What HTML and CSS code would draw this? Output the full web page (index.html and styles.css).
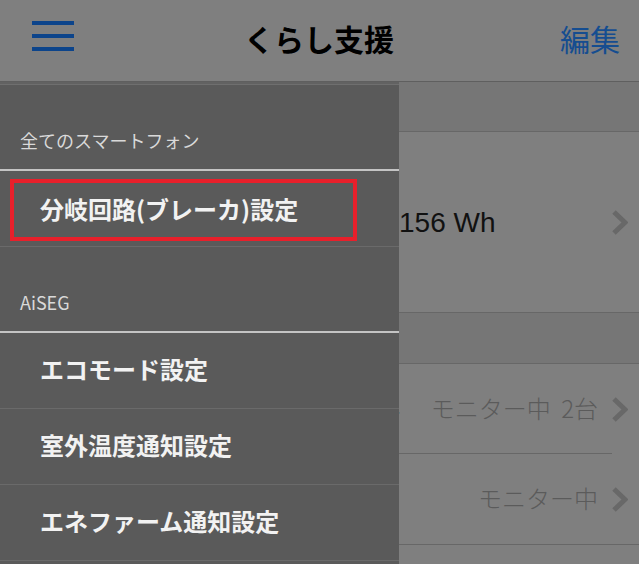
FILE: index.html
```html
<!DOCTYPE html>
<html lang="ja">
<head>
<meta charset="utf-8">
<link rel="stylesheet" href="styles.css">
</head>
<body>
<div class="app">
  <header class="navbar">
    <div class="hamburger"><span></span><span></span><span></span></div>
    <h1 class="title">くらし支援</h1>
    <div class="edit">編集</div>
  </header>
  <main class="content">
    <div class="section-head"></div>
    <div class="cell cell-big">
      <span class="spacer"></span>
      <span class="value">156 Wh</span>
      <svg class="chev" width="17" height="25" viewBox="0 0 17 25"><polyline points="3,2 14,12.5 3,23" fill="none" stroke="#686868" stroke-width="5"/></svg>
    </div>
    <div class="section-head sec2"></div>
    <div class="group">
      <div class="cell cell-row">
        <span class="label row-label">スマートパネル</span>
        <span class="detail">モニター中 2台</span>
        <svg class="chev" width="17" height="25" viewBox="0 0 17 25"><polyline points="3,2 14,12.5 3,23" fill="none" stroke="#686868" stroke-width="5"/></svg>
      </div>
      <div class="cell cell-row">
        <span class="detail">モニター中</span>
        <svg class="chev" width="17" height="25" viewBox="0 0 17 25"><polyline points="3,2 14,12.5 3,23" fill="none" stroke="#686868" stroke-width="5"/></svg>
      </div>
    </div>
  </main>

  <nav class="drawer">
    <div class="drawer-top"></div>
    <div class="group-head">全てのスマートフォン</div>
    <div class="group-line"></div>
    <div class="item item-marked">
      <span>分岐回路(ブレーカ)設定</span>
      <div class="highlight"></div>
    </div>
    <div class="group-head">AiSEG</div>
    <div class="group-line"></div>
    <div class="item"><span>エコモード設定</span></div>
    <div class="item"><span>室外温度通知設定</span></div>
    <div class="item"><span>エネファーム通知設定</span></div>
  </nav>
</div>
</body>
</html>
```

FILE: styles.css
```css
* { box-sizing: border-box; margin: 0; padding: 0; }
html, body { width: 639px; height: 564px; overflow: hidden; }
body {
  font-family: "Noto Sans CJK JP", "Noto Sans", sans-serif;
  background: #7f7f7f;
}
.app {
  position: relative;
  width: 639px;
  height: 564px;
  overflow: hidden;
  background: #7f7f7f;
}
.navbar {
  height: 82px;
  background: #7f7f7f;
  border-bottom: 1px solid #5f5f5f;
  display: flex;
  align-items: center;
  padding: 0 19px 2px 32px;
  position: relative;
}
.hamburger {
  width: 42px;
  display: flex;
  flex-direction: column;
  gap: 9px;
  margin-top: -7px;
}
.hamburger span {
  display: block;
  height: 4px;
  background: #0c448b;
}
.title {
  flex: 1;
  text-align: center;
  font-size: 30px;
  font-weight: 700;
  color: #000;
  margin-left: 4px;
  margin-top: -4px;
  line-height: 40px;
}
.edit {
  font-size: 30px;
  color: #154d90;
  font-weight: 400;
  margin-top: -4px;
  line-height: 40px;
}
.content { background: #7f7f7f; }
.section-head {
  height: 50px;
  background: #767676;
  border-bottom: 1px solid #676767;
}
.section-head.sec2 { height: 51px; }
.cell {
  display: flex;
  align-items: center;
  background: #7f7f7f;
  padding-right: 11px;
}
.cell-big {
  height: 181px;
  border-bottom: 1px solid #676767;
}
.spacer {
  width: 399px;
  flex-shrink: 0;
}
.value {
  flex: 1;
  font-family: "Liberation Sans", Arial, sans-serif;
  font-size: 28px;
  font-weight: 400;
  color: #111;
  padding-top: 2px;
}
.chev { flex-shrink: 0; display: block; }
.group { border-bottom: 1px solid #676767; }
.cell-row {
  height: 90px;
  position: relative;
}
.cell-row:first-child::after {
  content: "";
  position: absolute;
  left: 20px;
  right: 27px;
  bottom: 0;
  height: 1px;
  background: #676767;
}
.row-label {
  padding-left: 240px;
  font-size: 23px;
  color: #000;
  white-space: nowrap;
}
.detail {
  flex: 1;
  text-align: right;
  font-size: 24px;
  font-weight: 300;
  color: #5b5b5b;
  padding-right: 13px;
  white-space: nowrap;
  word-spacing: 5px;
  margin-bottom: 4px;
}

.drawer {
  position: absolute;
  left: 0;
  top: 82px;
  width: 399px;
  bottom: 0;
  background: #5a5a5a;
  display: flex;
  flex-direction: column;
}
.drawer-top {
  height: 3px;
  background: #626262;
  border-bottom: 1px solid #6f6f6f;
  flex-shrink: 0;
}
.group-head {
  height: 84px;
  display: flex;
  align-items: flex-end;
  padding: 0 0 17px 20px;
  font-size: 18px;
  line-height: 24px;
  color: #d9d9d9;
  font-weight: 400;
  flex-shrink: 0;
}
.group-line {
  height: 2px;
  background: #c4c4c4;
  flex-shrink: 0;
}
.item {
  height: 76px;
  border-bottom: 1px solid #6a6a6a;
  display: flex;
  align-items: center;
  padding-left: 40px;
  font-size: 24px;
  font-weight: 700;
  color: #f2f2f2;
  position: relative;
  flex-shrink: 0;
}
.item span { line-height: 32px; margin-top: -3px; }
.item-marked span { margin-top: 0; }
.highlight {
  position: absolute;
  left: 10px;
  top: 8px;
  width: 347px;
  height: 62px;
  border: 4px solid #e8202b;
}
```
